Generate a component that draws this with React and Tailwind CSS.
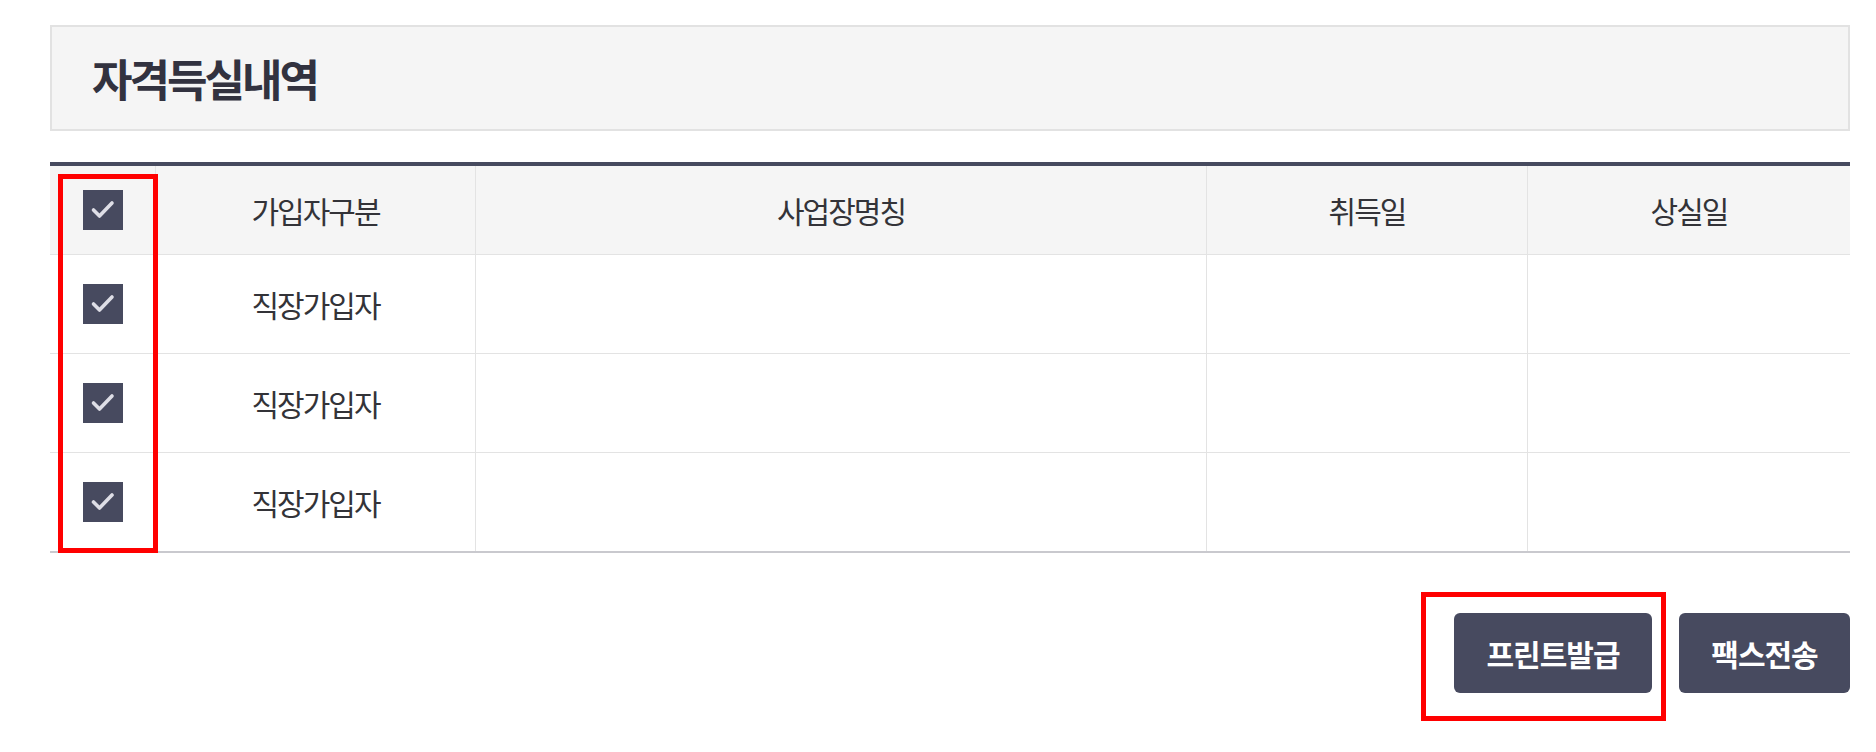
import React from "react";

function Check() {
  return (
    <div className="w-[40px] h-[40px] bg-[#474a5f] flex items-center justify-center">
      <svg width="40" height="40" viewBox="0 0 40 40">
        <path d="M10.5 20 L16.5 26 L29 13" fill="none" stroke="#dedee6" strokeWidth="3.6" strokeLinecap="round" strokeLinejoin="round" />
      </svg>
    </div>
  );
}

const cols = "grid grid-cols-[106px_320px_731px_321px_322px]";

function Row({ last }) {
  return (
    <div className={`${cols} ${last ? "h-[100px] border-b-2 border-[#c9c9ce]" : "h-[99px] border-b border-[#e3e3e3]"}`}>
      <div className="flex items-center justify-center border-r border-[#e3e3e3]">
        <Check />
      </div>
      <div className="flex items-center justify-center border-r border-[#e3e3e3] text-[30px] tracking-[-2px] text-[#333338]">
        직장가입자
      </div>
      <div className="border-r border-[#e3e3e3]" />
      <div className="border-r border-[#e3e3e3]" />
      <div />
    </div>
  );
}

export default function App() {
  return (
    <div className="relative w-[1876px] h-[752px] bg-white font-['Noto_Sans_CJK_KR','Noto_Sans',sans-serif]">
      <div className="pt-[25px] pl-[50px] w-[1850px]">
        <div className="h-[106px] border-2 border-[#e2e2e2] bg-[#f5f5f5] flex items-center pl-[40px]">
          <h1 className="text-[44px] font-bold tracking-[-3px] text-[#32323f] leading-none">자격득실내역</h1>
        </div>

        <div className="mt-[31px] border-t-4 border-[#464a5e]">
          <div className={`${cols} h-[89px] bg-[#f5f5f5] border-b border-[#e3e3e3] text-[30px] tracking-[-2px] text-[#333338]`}>
            <div className="flex items-center justify-center border-r border-[#e3e3e3]">
              <Check />
            </div>
            <div className="flex items-center justify-center border-r border-[#e3e3e3]">가입자구분</div>
            <div className="flex items-center justify-center border-r border-[#e3e3e3]">사업장명칭</div>
            <div className="flex items-center justify-center border-r border-[#e3e3e3]">취득일</div>
            <div className="flex items-center justify-center">상실일</div>
          </div>
          <Row />
          <Row />
          <Row last />
        </div>

        <div className="mt-[60px] flex justify-end gap-[27px]">
          <button className="w-[198px] h-[80px] rounded-[6px] bg-[#474a5f] text-white text-[30px] font-bold tracking-[-1px]">
            프린트발급
          </button>
          <button className="w-[171px] h-[80px] rounded-[6px] bg-[#474a5f] text-white text-[30px] font-bold tracking-[-1px]">
            팩스전송
          </button>
        </div>
      </div>

      <div className="absolute left-[58px] top-[174px] w-[100px] h-[379px] border-[5px] border-[#ff0000] pointer-events-none" />
      <div className="absolute left-[1421px] top-[592px] w-[245px] h-[129px] border-[5px] border-[#ff0000] pointer-events-none" />
    </div>
  );
}
